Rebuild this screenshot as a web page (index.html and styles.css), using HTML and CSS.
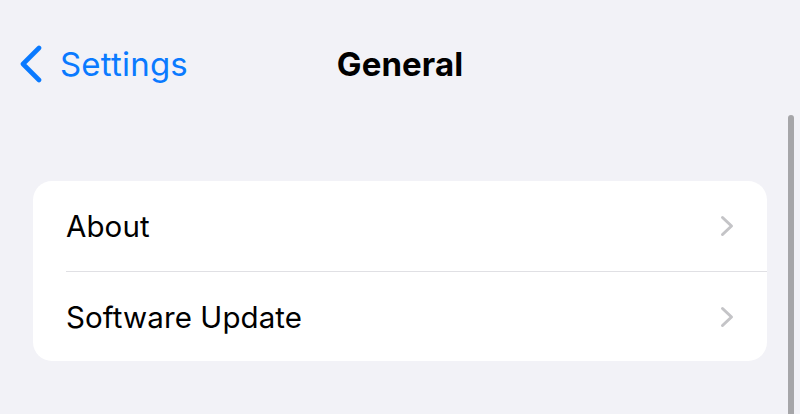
FILE: index.html
```html
<!DOCTYPE html>
<html lang="en">
<head>
    <meta charset="UTF-8">
    <meta name="viewport" content="width=device-width, initial-scale=1.0">
    <title>General</title>
    <link rel="stylesheet" href="styles.css">
</head>
<body>
    <div class="screen">
        <header class="navbar">
            <a class="back" href="#">
                <svg class="back-icon" width="24" height="38" viewBox="0 0 24 38">
                    <path d="M21 3 L5 19 L21 35" fill="none" stroke="#0a7aff" stroke-width="4.6" stroke-linecap="round" stroke-linejoin="round"/>
                </svg>
                <span>Settings</span>
            </a>
            <h1 class="title">General</h1>
            <div></div>
        </header>

        <ul class="group">
            <li class="row">
                <span class="label">About</span>
                <svg class="chevron" width="14" height="22" viewBox="0 0 14 22">
                    <path d="M2.5 2.5 L11.5 11 L2.5 19.5" fill="none" stroke="#c4c4c7" stroke-width="3" stroke-linecap="round" stroke-linejoin="round"/>
                </svg>
            </li>
            <li class="row">
                <span class="label">Software Update</span>
                <svg class="chevron" width="14" height="22" viewBox="0 0 14 22">
                    <path d="M2.5 2.5 L11.5 11 L2.5 19.5" fill="none" stroke="#c4c4c7" stroke-width="3" stroke-linecap="round" stroke-linejoin="round"/>
                </svg>
            </li>
        </ul>

        <div class="scroll-indicator"></div>
    </div>
</body>
</html>
```

FILE: styles.css
```css
* {
    box-sizing: border-box;
}
body {
    margin: 0;
    padding: 0;
    background-color: #f2f2f7;
    font-family: Inter, "Noto Sans", sans-serif;
    color: #000;
    overflow: hidden;
}
.screen {
    position: relative;
    height: 414px;
    padding-top: 34px;
    overflow: hidden;
}
.navbar {
    display: grid;
    grid-template-columns: 1fr auto 1fr;
    align-items: center;
    height: 60px;
    padding: 0 18px;
}
.back {
    display: flex;
    align-items: center;
    gap: 18px;
    color: #0a7aff;
    text-decoration: none;
    font-size: 33px;
    letter-spacing: 0.2px;
}
.back-icon {
    display: block;
}
.title {
    margin: 0;
    font-size: 33px;
    font-weight: 700;
    letter-spacing: 0.1px;
}
.group {
    list-style: none;
    margin: 87px 33px 0;
    padding: 0;
    background: #fff;
    border-radius: 19px;
    overflow: hidden;
}
.row {
    display: flex;
    align-items: center;
    justify-content: space-between;
    height: 90px;
    margin-left: 33px;
    padding-right: 33px;
    font-size: 29.5px;
}
.row + .row {
    border-top: 1px solid #e0e0e4;
}
.label {
    letter-spacing: 0.1px;
}
.chevron {
    display: block;
}
.scroll-indicator {
    position: absolute;
    right: 6px;
    top: 115px;
    bottom: -10px;
    width: 6px;
    border-radius: 3px;
    background: #a6a6a9;
}
```
